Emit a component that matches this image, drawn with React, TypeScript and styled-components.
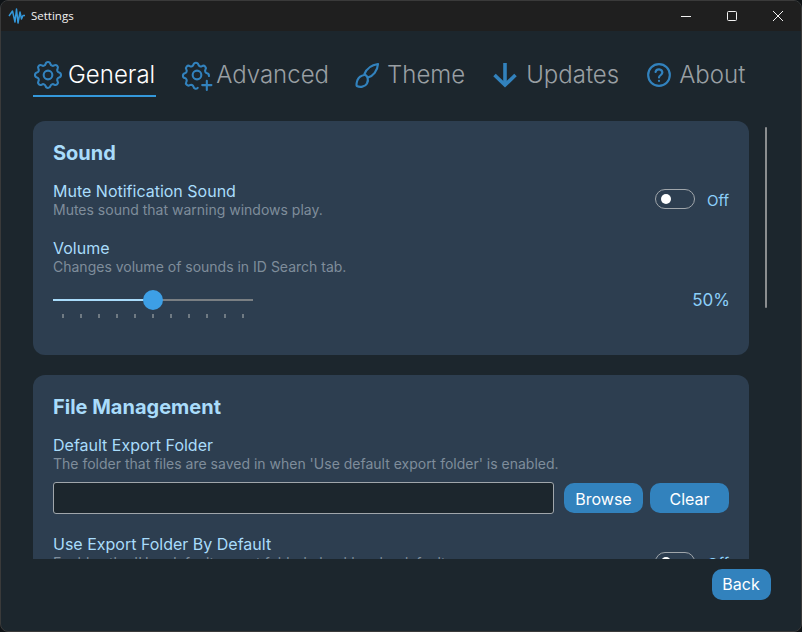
import styled, { createGlobalStyle } from "styled-components";
import { ReactNode } from "react";

const GlobalStyle = createGlobalStyle`
  html, body {
    margin: 0;
    padding: 0;
    background: #0f1316;
  }
  * {
    box-sizing: border-box;
  }
`;

const Window = styled.div`
  width: 802px;
  height: 632px;
  display: flex;
  flex-direction: column;
  position: relative;
  overflow: hidden;
  border-radius: 8px;
  border: 1px solid #3a3a3a;
  background: #1c262d;
  font-family: Inter, "Noto Sans", sans-serif;
`;

const TitleBar = styled.div`
  height: 30px;
  flex: none;
  display: flex;
  align-items: center;
  background: #1f1f1f;
  padding: 0 0 1px 7px;
`;

const TitleText = styled.span`
  margin-left: 5px;
  font-family: "Open Sans", sans-serif;
  font-size: 11.5px;
  color: #f2f2f2;
`;

const WindowButtons = styled.div`
  margin-left: auto;
  display: flex;
  height: 100%;
`;

const WindowButton = styled.div`
  width: 46px;
  height: 100%;
  display: flex;
  align-items: center;
  justify-content: center;
`;

const Body = styled.div`
  flex: 1;
  min-height: 0;
  display: flex;
  flex-direction: column;
`;

const Tabs = styled.nav`
  display: flex;
  padding: 24px 0 0 32px;
  flex: none;
`;

const Tab = styled.div<{ $active?: boolean; $gap: number; $right: number }>`
  display: flex;
  align-items: center;
  gap: ${(p) => p.$gap}px;
  height: 42px;
  padding: 0 1px;
  margin-right: ${(p) => p.$right}px;
  font-size: 24px;
  font-weight: 300;
  color: ${(p) => (p.$active ? "#ffffff" : "#999fa3")};
  border-bottom: 2px solid ${(p) => (p.$active ? "#3498db" : "transparent")};

  svg {
    flex: none;
    overflow: visible;
  }
`;

const TabLabel = styled.span`
  margin-bottom: 2px;
`;

const ScrollArea = styled.div`
  position: relative;
  height: 449px;
  margin-top: 13px;
  overflow: hidden;
  flex: none;
`;

const ScrollThumb = styled.div`
  position: absolute;
  left: 764px;
  top: 17px;
  width: 2px;
  height: 181px;
  border-radius: 1px;
  background: #8a8d8f;
`;

const Content = styled.div`
  padding: 11px 0 0 32px;
  width: 748px;
  display: flex;
  flex-direction: column;
  gap: 20px;
`;

const Card = styled.section<{ $height: number }>`
  height: ${(p) => p.$height}px;
  flex: none;
  background: #2d3e50;
  border-radius: 12px;
  padding: 20px;
`;

const CardTitle = styled.h2`
  margin: 0 0 17px;
  font-size: 20px;
  line-height: 24px;
  font-weight: 700;
  color: #a9dcfb;
`;

const Setting = styled.div<{ $top?: number; $bottom?: number }>`
  display: flex;
  align-items: flex-start;
  margin-top: ${(p) => p.$top ?? 0}px;
  margin-bottom: ${(p) => p.$bottom ?? 0}px;
`;

const SettingText = styled.div`
  flex: 1;
  min-width: 0;
`;

const SettingName = styled.div`
  font-size: 16px;
  line-height: 19px;
  color: #a9dcfb;
`;

const SettingHint = styled.div`
  font-size: 14px;
  line-height: 16px;
  margin-top: 1px;
  color: #7f8d9b;
  white-space: nowrap;
`;

const SwitchGroup = styled.div<{ $top: number }>`
  display: flex;
  align-items: center;
  gap: 12px;
  padding-top: ${(p) => p.$top}px;
`;

const Switch = styled.div`
  width: 40px;
  height: 20px;
  border: 1px solid #a0a6ab;
  border-radius: 10px;
  display: flex;
  align-items: center;
  padding-left: 5px;
`;

const SwitchKnob = styled.div`
  width: 10px;
  height: 10px;
  border-radius: 50%;
  background: #fff;
`;

const SwitchLabel = styled.span`
  font-size: 15px;
  line-height: 16px;
  margin-top: 3px;
  color: #8ccff9;
`;

const SliderRow = styled.div`
  display: flex;
  justify-content: space-between;
  margin-top: 14px;
`;

const Slider = styled.div`
  position: relative;
  width: 200px;
  height: 40px;
`;

const SliderTrack = styled.div`
  position: absolute;
  top: 10px;
  left: 0;
  width: 100%;
  height: 2px;
  background: #7a7f83;
`;

const SliderFill = styled.div`
  height: 100%;
  background: #a9dcfb;
`;

const SliderThumb = styled.div`
  position: absolute;
  top: 1px;
  width: 20px;
  height: 20px;
  border-radius: 50%;
  background: #3d9fe6;
`;

const Ticks = styled.div`
  position: absolute;
  top: 25px;
  left: 9px;
  display: flex;
  gap: 16px;
`;

const Tick = styled.div`
  width: 2px;
  height: 4px;
  background: #6f7a83;
`;

const SliderValue = styled.span`
  font-size: 17px;
  line-height: 20px;
  margin: 1px -1px 0 0;
  color: #8ccff9;
`;

const FolderRow = styled.div`
  display: flex;
  align-items: center;
  gap: 7px;
  margin-top: 10px;
`;

const FolderInput = styled.div`
  flex: 1;
  height: 32px;
  margin-right: 3px;
  border: 1px solid #a0a6ab;
  border-radius: 3px;
  background: #1c262d;
`;

const Button = styled.button<{ $width: number }>`
  width: ${(p) => p.$width}px;
  height: 30px;
  padding: 1px 0 0;
  border: 0;
  border-radius: 10px;
  background: #3282bd;
  color: #fff;
  font-family: inherit;
  font-size: 16px;
`;

const Footer = styled.div`
  flex: 1;
  display: flex;
  justify-content: flex-end;
  align-items: flex-start;
  padding: 10px 30px 0 0;
`;

const BackButton = styled(Button)`
  height: 31px;
  padding: 0 1px 1px 0;
`;

const iconColor = "#3282bd";
const volume = 50;

const gearPath =
  "M10.325 4.317c.426-1.756 2.924-1.756 3.35 0a1.724 1.724 0 0 0 2.573 1.066c1.543-.94 3.31.826 2.37 2.37a1.724 1.724 0 0 0 1.065 2.572c1.756.426 1.756 2.924 0 3.35a1.724 1.724 0 0 0-1.066 2.573c.94 1.543-.826 3.31-2.37 2.37a1.724 1.724 0 0 0-2.572 1.065c-.426 1.756-2.924 1.756-3.35 0a1.724 1.724 0 0 0-2.573-1.066c-1.543.94-3.31-.826-2.37-2.37a1.724 1.724 0 0 0-1.065-2.572c-1.756-.426-1.756-2.924 0-3.35a1.724 1.724 0 0 0 1.066-2.573c-.94-1.543.826-3.31 2.37-2.37 1 .608 2.296.07 2.572-1.065z";

const gearOpenPath =
  "M12.483 20.935c-.862 1.015-2.608.752-2.908-.787a1.723 1.723 0 0 0-2.573-1.066c-1.543.94-3.31-.826-2.37-2.37a1.724 1.724 0 0 0-1.065-2.572c-1.756-.426-1.756-2.924 0-3.35a1.724 1.724 0 0 0 1.066-2.573c-.94-1.543.826-3.31 2.37-2.37 1 .608 2.296.07 2.572-1.065.426-1.756 2.924-1.756 3.35 0a1.724 1.724 0 0 0 2.573 1.066c1.543-.94 3.31.826 2.37 2.37a1.724 1.724 0 0 0 1.065 2.572c.967.235 1.41 1.112 1.33 1.94";

const Gear = () => (
  <svg width="28" height="28" viewBox="2.3 2.3 19.4 19.4" fill="none" stroke={iconColor} strokeWidth="1.45" strokeLinecap="round" strokeLinejoin="round">
    <path d={gearPath} />
    <circle cx="12" cy="12" r="3" />
  </svg>
);

const GearPlus = () => (
  <svg width="28" height="28" viewBox="2.3 2.3 19.4 19.4" fill="none" stroke={iconColor} strokeWidth="1.45" strokeLinecap="round" strokeLinejoin="round">
    <path d={gearOpenPath} />
    <circle cx="12" cy="12" r="3" />
    <path d="M15.6 19h6.4M18.8 16v6.4" />
  </svg>
);

const Brush = () => (
  <svg width="28" height="28" viewBox="0 0 28 28" fill="none" stroke={iconColor} strokeWidth="2.2" strokeLinecap="round" strokeLinejoin="round">
    <path d="M25 3C18.5 4 13.5 8 11.5 13L15 16.5C20 15 24.5 10 25 3z" />
    <path d="M11.5 14C8 14.5 6 15.5 4.5 19C3.5 22 3.5 24.5 3.8 25C7 26.5 12 26 14 22.5C15 20.5 15 18 14.5 16.5" />
  </svg>
);

const ArrowDown = () => (
  <svg width="28" height="28" viewBox="0 0 28 28" fill="none" stroke={iconColor} strokeWidth="3.6" strokeLinejoin="miter">
    <path d="M14 2v21" />
    <path d="M3.5 14L14 24L24.5 14" />
  </svg>
);

const Help = () => (
  <svg width="26" height="26" viewBox="0 0 24 24" fill="none" stroke={iconColor} strokeWidth="2" strokeLinecap="round" strokeLinejoin="round">
    <circle cx="12" cy="12" r="10" />
    <path d="M8.8 9.2a3.2 3.2 0 0 1 6.3.6c0 2.2-3.1 2.6-3.1 4.4" />
    <path d="M12 17.4v.1" />
  </svg>
);

const AppLogo = () => (
  <svg width="18" height="18" viewBox="0 0 18 18" fill="none" stroke="#3498db" strokeWidth="1.5" strokeLinejoin="round">
    <path d="M1 9l3.5-5 2.5 11 1.5-13 1.5 14 2-11 1.5 7 1.5-3.5h2" />
  </svg>
);

const TabItem = ({ icon, label, active, gap, right }: { icon: ReactNode; label: string; active?: boolean; gap: number; right: number }) => (
  <Tab $active={active} $gap={gap} $right={right}>
    {icon}
    <TabLabel>{label}</TabLabel>
  </Tab>
);

const OffSwitch = ({ top }: { top: number }) => (
  <SwitchGroup $top={top}>
    <Switch>
      <SwitchKnob />
    </Switch>
    <SwitchLabel>Off</SwitchLabel>
  </SwitchGroup>
);

export default function App() {
  return (
    <Window>
      <GlobalStyle />
      <TitleBar>
        <AppLogo />
        <TitleText>Settings</TitleText>
        <WindowButtons>
          <WindowButton>
            <svg width="10" height="10" viewBox="0 0 10 10" stroke="#f2f2f2" strokeWidth="1">
              <path d="M0 5.5h10" />
            </svg>
          </WindowButton>
          <WindowButton>
            <svg width="10" height="10" viewBox="0 0 10 10" fill="none" stroke="#f2f2f2" strokeWidth="1">
              <rect x="0.5" y="0.5" width="9" height="9" rx="1" />
            </svg>
          </WindowButton>
          <WindowButton>
            <svg width="10" height="10" viewBox="0 0 10 10" stroke="#f2f2f2" strokeWidth="1">
              <path d="M0 0l10 10M10 0L0 10" />
            </svg>
          </WindowButton>
        </WindowButtons>
      </TitleBar>
      <Body>
        <Tabs>
          <TabItem icon={<Gear />} label="General" active gap={6} right={26} />
          <TabItem icon={<GearPlus />} label="Advanced" gap={5} right={22} />
          <TabItem icon={<Brush />} label="Theme" gap={6} right={24} />
          <TabItem icon={<ArrowDown />} label="Updates" gap={7} right={25} />
          <TabItem icon={<Help />} label="About" gap={7} right={0} />
        </Tabs>
        <ScrollArea>
          <ScrollThumb />
          <Content>
            <Card $height={234}>
              <CardTitle>Sound</CardTitle>
              <Setting $bottom={21}>
                <SettingText>
                  <SettingName>Mute Notification Sound</SettingName>
                  <SettingHint>Mutes sound that warning windows play.</SettingHint>
                </SettingText>
                <OffSwitch top={7} />
              </Setting>
              <SettingName>Volume</SettingName>
              <SettingHint>Changes volume of sounds in ID Search tab.</SettingHint>
              <SliderRow>
                <Slider>
                  <SliderTrack>
                    <SliderFill style={{ width: `${volume}%` }} />
                  </SliderTrack>
                  <SliderThumb style={{ left: volume * 2 - 10 }} />
                  <Ticks>
                    {Array.from({ length: 11 }, (_, i) => (
                      <Tick key={i} />
                    ))}
                  </Ticks>
                </Slider>
                <SliderValue>{volume}%</SliderValue>
              </SliderRow>
            </Card>
            <Card $height={400}>
              <CardTitle>File Management</CardTitle>
              <SettingName>Default Export Folder</SettingName>
              <SettingHint>The folder that files are saved in when 'Use default export folder' is enabled.</SettingHint>
              <FolderRow>
                <FolderInput />
                <Button $width={79}>Browse</Button>
                <Button $width={79}>Clear</Button>
              </FolderRow>
              <Setting $top={21}>
                <SettingText>
                  <SettingName>Use Export Folder By Default</SettingName>
                  <SettingHint>Enables the 'Use default export folder' checkbox by default.</SettingHint>
                </SettingText>
                <OffSwitch top={17} />
              </Setting>
            </Card>
          </Content>
        </ScrollArea>
        <Footer>
          <BackButton $width={59}>Back</BackButton>
        </Footer>
      </Body>
    </Window>
  );
}
